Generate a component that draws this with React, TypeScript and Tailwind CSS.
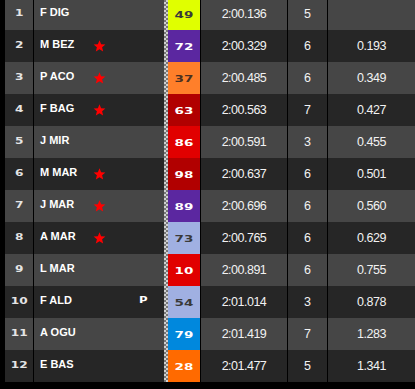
import React from "react";

type Row = {
  pos: string;
  name: string;
  star: boolean;
  pit: boolean;
  num: string;
  badge: string;
  time: string;
  laps: string;
  gap: string;
};

const rows: Row[] = [
  { pos: "1", name: "F DIG", star: false, pit: false, num: "49", badge: "bg-[#e0ff00] text-[#3a3a3a]", time: "2:00.136", laps: "5", gap: "" },
  { pos: "2", name: "M BEZ", star: true, pit: false, num: "72", badge: "bg-[#5b27a0] text-white", time: "2:00.329", laps: "6", gap: "0.193" },
  { pos: "3", name: "P ACO", star: true, pit: false, num: "37", badge: "bg-[#ff7f2a] text-[#4a3020]", time: "2:00.485", laps: "6", gap: "0.349" },
  { pos: "4", name: "F BAG", star: true, pit: false, num: "63", badge: "bg-[#b10000] text-white", time: "2:00.563", laps: "7", gap: "0.427" },
  { pos: "5", name: "J MIR", star: false, pit: false, num: "86", badge: "bg-[#e10000] text-white", time: "2:00.591", laps: "3", gap: "0.455" },
  { pos: "6", name: "M MAR", star: true, pit: false, num: "98", badge: "bg-[#b10000] text-white", time: "2:00.637", laps: "6", gap: "0.501" },
  { pos: "7", name: "J MAR", star: true, pit: false, num: "89", badge: "bg-[#5b27a0] text-white", time: "2:00.696", laps: "6", gap: "0.560" },
  { pos: "8", name: "A MAR", star: true, pit: false, num: "73", badge: "bg-[#a0b0e2] text-[#3a3a3a]", time: "2:00.765", laps: "6", gap: "0.629" },
  { pos: "9", name: "L MAR", star: false, pit: false, num: "10", badge: "bg-[#e10000] text-white", time: "2:00.891", laps: "6", gap: "0.755" },
  { pos: "10", name: "F ALD", star: false, pit: true, num: "54", badge: "bg-[#a0b0e2] text-[#3a3a3a]", time: "2:01.014", laps: "3", gap: "0.878" },
  { pos: "11", name: "A OGU", star: false, pit: false, num: "79", badge: "bg-[#0088dd] text-white", time: "2:01.419", laps: "7", gap: "1.283" },
  { pos: "12", name: "E BAS", star: false, pit: false, num: "28", badge: "bg-[#ff6a00] text-white", time: "2:01.477", laps: "5", gap: "1.341" },
];

function Star() {
  return (
    <svg width="13" height="12" viewBox="0 0 24 23" className="block">
      <path
        d="M12 0.5l3.1 7.6 8.2 0.6-6.3 5.3 2 8-7-4.4-7 4.4 2-8L0.7 8.7l8.2-0.6z"
        fill="#ff0000"
      />
    </svg>
  );
}

export default function App() {
  return (
    <div className="w-[415px] h-[389px] bg-black overflow-hidden">
      <div className="pl-[5px] -mt-[2px]">
        {rows.map((r, i) => (
          <div
            key={r.pos}
            className={`flex h-[32px] ${i % 2 === 0 ? "bg-[#464646]" : "bg-[#262626]"}`}
          >
            <div className="w-[28px] flex items-center justify-center">
              <span className="font-['DejaVu_Sans'] font-bold text-[9px] text-[#e4e4e4] inline-block scale-x-[1.35] scale-y-[0.9]">
                {r.pos}
              </span>
            </div>
            <div className="w-[1px] bg-black" />
            <div className="w-[130px] flex items-center pl-[6px]">
              <span className="w-[53px] font-['Liberation_Sans'] font-bold text-[11px] text-white leading-none pb-[3px]">
                {r.name}
              </span>
              <span className="w-[13px]">{r.star ? <Star /> : null}</span>
              {r.pit ? (
                <span className="ml-auto mr-[17px] font-['DejaVu_Sans'] font-bold text-[9px] text-white inline-block scale-x-[1.3] pb-[2px]">
                  P
                </span>
              ) : null}
            </div>
            <div className="w-[4px] bg-[repeating-conic-gradient(#777_0_25%,#d0d0d0_0_50%)] bg-[length:4px_4px]" />
            <div className={`w-[32px] flex items-center justify-center ${r.badge}`}>
              <span className="font-['DejaVu_Sans'] font-bold text-[10px] inline-block scale-x-[1.35] scale-y-[0.9]">
                {r.num}
              </span>
            </div>
            <div className="w-[1px] bg-black" />
            <div className="w-[86px] flex items-center justify-center font-['Liberation_Sans'] text-[12.5px] tracking-[-0.5px] text-[#f2f2f2]">
              {r.time}
            </div>
            <div className="w-[1px] bg-black" />
            <div className="w-[39px] flex items-center justify-center font-['Liberation_Sans'] text-[12.5px] text-[#f2f2f2]">
              {r.laps}
            </div>
            <div className="w-[1px] bg-black" />
            <div className="flex-1 flex items-center justify-center font-['Liberation_Sans'] text-[12.5px] tracking-[-0.5px] text-[#f2f2f2]">
              {r.gap}
            </div>
          </div>
        ))}
      </div>
    </div>
  );
}
